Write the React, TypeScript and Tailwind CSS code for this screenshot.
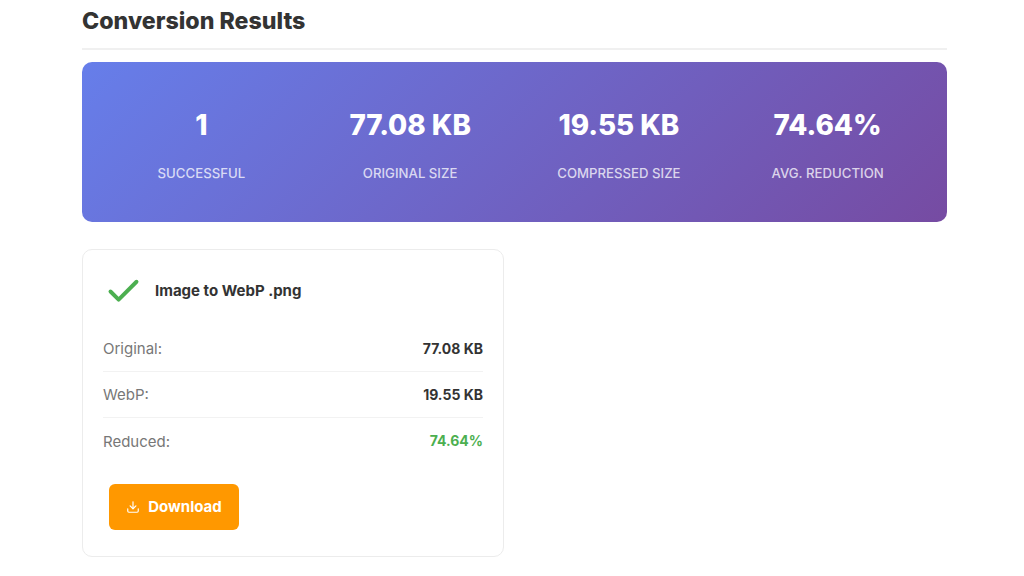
import { Check, Download } from 'lucide-react';

const stats = [
  { value: '1', label: 'SUCCESSFUL' },
  { value: '77.08 KB', label: 'ORIGINAL SIZE' },
  { value: '19.55 KB', label: 'COMPRESSED SIZE' },
  { value: '74.64%', label: 'AVG. REDUCTION' },
];

const rows = [
  { label: 'Original:', value: '77.08 KB', color: 'text-[#333333]' },
  { label: 'WebP:', value: '19.55 KB', color: 'text-[#333333]' },
  { label: 'Reduced:', value: '74.64%', color: 'text-[#4caf50]' },
];

export default function App() {
  return (
    <div className="w-[1024px] h-[576px] overflow-hidden bg-white pl-[82px] font-['Inter',sans-serif]">
      <div className="w-[865px]">
        {/* Title */}
        <div className="h-[50px] border-b-2 border-[#f0f0f0] pt-[5px]">
          <h2 className="text-[23.2px] leading-[32px] font-extrabold text-[#333333]">Conversion Results</h2>
        </div>

        {/* Summary banner */}
        <div className="mt-[12px] h-[160px] rounded-[10px] bg-[linear-gradient(135deg,#667eea,#764ba2)] grid grid-cols-4 px-[15px] text-white">
          {stats.map((stat) => (
            <div key={stat.label} className="flex flex-col items-center pt-[45px]">
              <div className="text-[27.8px] leading-[36px] font-extrabold">{stat.value}</div>
              <div className="mt-[20px] text-[13.2px] leading-[20px] font-medium text-white/75">{stat.label}</div>
            </div>
          ))}
        </div>

        {/* File card */}
        <div className="mt-[27px] h-[308px] w-[422px] rounded-[10px] border border-[#ececec] px-[20px] pt-[24px]">
          <div className="flex items-center h-[34px] pl-[3px]">
            <Check size={39} strokeWidth={2.4} className="text-[#4caf50] shrink-0 -ml-[2px]" />
            <span className="ml-[12px] text-[15px] font-bold text-[#333333]">Image to WebP .png</span>
          </div>

          <div className="mt-[18px]">
            {rows.map((row, i) => (
              <div
                key={row.label}
                className={`flex items-center justify-between h-[46px] ${i < 2 ? 'border-b border-[#f2f2f2]' : ''}`}
              >
                <span className="text-[15px] leading-[22px] pt-[1px] text-[#777777]">{row.label}</span>
                <span className={`text-[14px] leading-[22px] font-bold ${row.color}`}>{row.value}</span>
              </div>
            ))}
          </div>

          <button className="mt-[20px] ml-[6px] flex items-center justify-center gap-[8px] h-[46px] w-[130px] rounded-[6px] bg-[#ff9800] text-white text-[15px] font-bold">
            <Download size={14} />
            Download
          </button>
        </div>
      </div>
    </div>
  );
}
